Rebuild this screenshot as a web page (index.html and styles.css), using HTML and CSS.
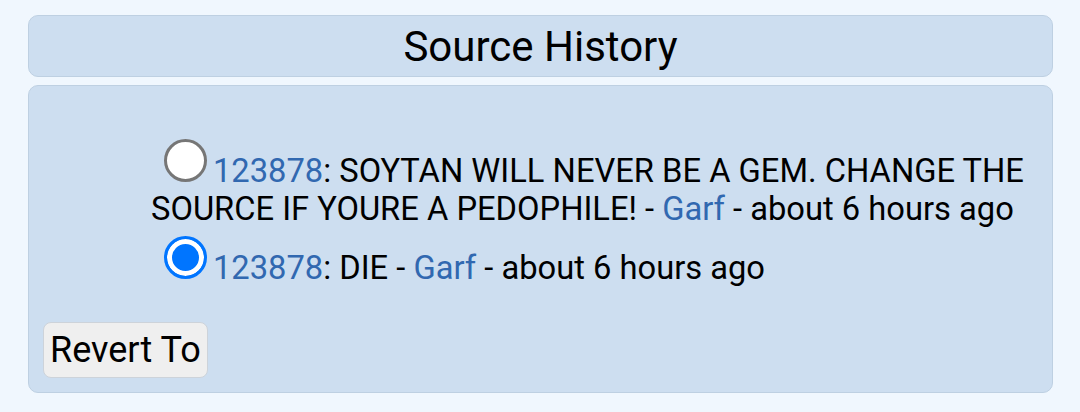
FILE: index.html
```html
<!DOCTYPE html>
<html lang="en">
<head>
    <meta charset="UTF-8">
    <meta name="viewport" content="width=device-width, initial-scale=1.0">
    <title>Source History</title>
    <link rel="stylesheet" href="styles.css">
</head>
<body>
    <div class="header">
        <h2>Source History</h2>
    </div>
    <div class="panel">
        <ul class="history">
            <li>
                <input type="radio" name="rev" value="1"><a href="#">123878</a>: SOYTAN WILL NEVER BE A GEM. CHANGE THE SOURCE IF YOURE A PEDOPHILE! - <a href="#">Garf</a> - about 6 hours ago
            </li>
            <li>
                <input type="radio" name="rev" value="2" checked><a href="#">123878</a>: DIE - <a href="#">Garf</a> - about 6 hours ago
            </li>
        </ul>
        <button class="revert">Revert To</button>
    </div>
</body>
</html>
```

FILE: styles.css
```css
body {
    margin: 15px 27px 0 28px;
    background-color: #f0f7fe;
    font-family: Roboto, "Liberation Sans", sans-serif;
    color: #000;
}

.header {
    background: #cddef0;
    border: 1px solid #bed0e2;
    border-radius: 10px;
    padding: 6px 0 5px;
    text-align: center;
}

.header h2 {
    margin: 0;
    font-size: 42px;
    font-weight: normal;
}

.panel {
    margin-top: 8px;
    background: #cddef0;
    border: 1px solid #bed0e2;
    border-radius: 10px;
    padding: 14px;
}

.history {
    list-style: none;
    margin: 31px 0 35px;
    padding-left: 108px;
    font-size: 32.7px;
}

.history a {
    color: #3168b0;
    text-decoration: none;
}

.history input {
    appearance: none;
    width: 43px;
    height: 43px;
    margin: 8px 6px 0 13px;
    border: 3px solid #767676;
    border-radius: 50%;
    background: #fff;
}

.history input:checked {
    border-color: #0075ff;
    background: #0075ff;
    box-shadow: inset 0 0 0 5px #fff;
}

.revert {
    font-family: Roboto, "Liberation Sans", sans-serif;
    font-size: 36px;
    padding: 6px 6px;
    border: 1px solid #cdd3da;
    border-radius: 8px;
    background: #efefef;
    color: #000;
}
```
